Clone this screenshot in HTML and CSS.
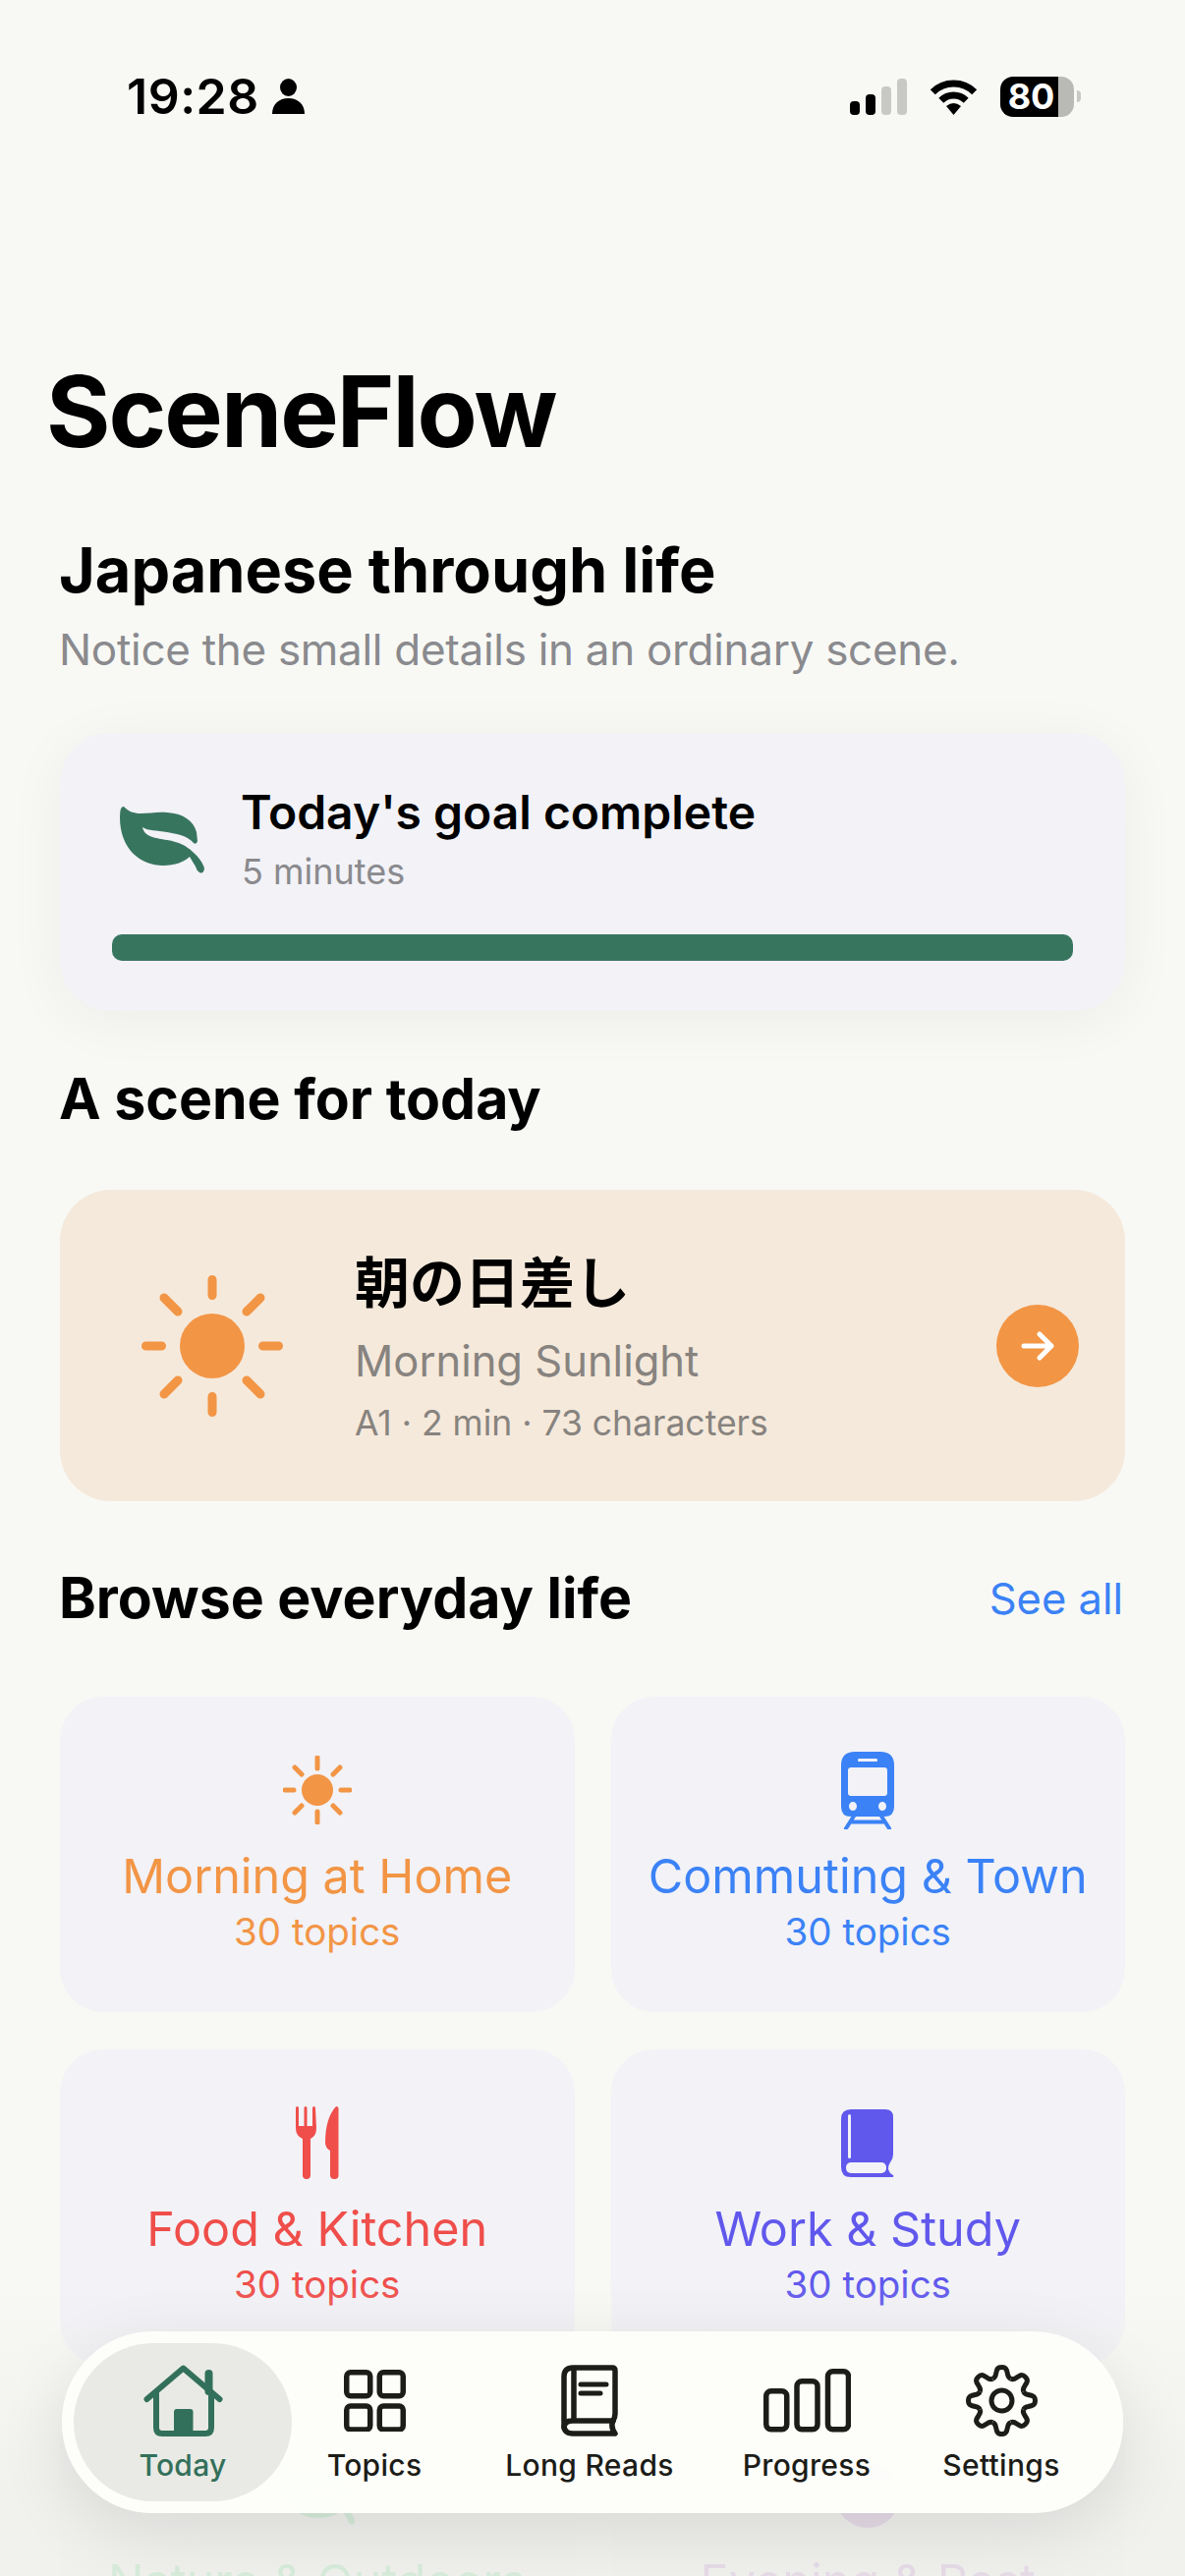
FILE: index.html
```html
<!DOCTYPE html>
<html lang="en">
<head>
<meta charset="utf-8">
<title>SceneFlow</title>
<link rel="stylesheet" href="styles.css">
</head>
<body>
<div class="screen">
  <div class="status">
    <div class="status-left">
      <span class="time">19:28</span>
      <svg class="person" width="33" height="36" viewBox="0 0 33 36"><ellipse cx="16.5" cy="9" rx="8.5" ry="9"/><path d="M0 36C0 26 7 20 16.5 20S33 26 33 36Z"/></svg>
    </div>
    <div class="status-right">
      <div class="signal">
        <i class="sig sig1"></i><i class="sig sig2"></i><i class="sig sig3 off"></i><i class="sig sig4 off"></i>
      </div>
      <svg class="wifi" width="51" height="37" viewBox="0 0 51 37"><path d="M4.3 13.8A30 30 0 0 1 46.7 13.8M12.8 22.3A18 18 0 0 1 38.2 22.3" fill="none" stroke="#000" stroke-width="7"/><path d="M25.5 37L18 28Q25.5 22 33 28Z"/></svg>
      <div class="battery"><div class="battery-body"><span class="battery-fill">80</span><span class="battery-rest"></span></div><span class="battery-cap"></span></div>
    </div>
  </div>

  <h1 class="brand">SceneFlow</h1>

  <main class="content">
    <h2 class="headline">Japanese through life</h2>
    <p class="tagline">Notice the small details in an ordinary scene.</p>

    <section class="goal-card">
      <div class="goal-row">
        <svg class="leaf" width="90" height="72" viewBox="0 0 90 72"><path d="M6 2C11 7 16 9 23 9C32 9 40 7 50 8C66 9 77 16 80 28L81 37Q80 41 77 39C70 31 60 30 50 28C40 26 31 27 25 23C27 33 38 34 50 36C62 38 70 42 76 48C82 53 87 60 88 65Q87 71 83 69Q80 67 79 63L73 53C68 58 58 62 46 62C24 62 2 46 2 13Q2 1 6 2Z"/></svg>
        <div>
          <div class="goal-title">Today's goal complete</div>
          <div class="goal-sub">5 minutes</div>
        </div>
      </div>
      <div class="goal-bar"></div>
    </section>

    <h2 class="section-title scene-heading">A scene for today</h2>

    <section class="scene-card">
      <svg class="scene-sun" width="144" height="144" viewBox="0 0 144 144">
        <circle cx="72" cy="72" r="33"/>
        <g class="rays">
          <path d="M72 4.500V20.500M72 123.500V139.500M4.500 72H20.500M123.500 72H139.500M23 23L37 37M107 107L121 121M121 23L107 37M37 107L23 121"/>
        </g>
      </svg>
      <div class="scene-text">
        <div class="scene-jp">朝の日差し</div>
        <div class="scene-en">Morning Sunlight</div>
        <div class="scene-meta">A1 · 2 min · 73 characters</div>
      </div>
      <div class="scene-go">
        <svg width="34" height="30" viewBox="0 0 34 30"><path d="M3 15H31M19 3L31 15L19 27" fill="none" stroke="#fff" stroke-width="5" stroke-linecap="round" stroke-linejoin="round"/></svg>
      </div>
    </section>

    <div class="browse-head">
      <h2 class="section-title">Browse everyday life</h2>
      <span class="see-all">See all</span>
    </div>

    <section class="grid">
      <article class="topic orange">
        <div class="topic-icon">
          <svg width="70" height="70" viewBox="0 0 70 70"><circle cx="35" cy="35" r="16"/><path class="thin-rays" d="M35 2V13M35 57V68M2 35H11M59 35H68M12 12L19 19M58 12L51 19M12 58L19 51M58 58L51 51"/></svg>
        </div>
        <div class="topic-name">Morning at Home</div>
        <div class="topic-count">30 topics</div>
      </article>
      <article class="topic blue">
        <div class="topic-icon">
          <svg width="54" height="79" viewBox="0 0 54 79"><path fill-rule="evenodd" d="M14 0H40Q54 0 54 14V56Q54 66 44 66H10Q0 66 0 56V14Q0 0 14 0ZM18 7Q17 7 17 8.500Q17 10 18 10H36Q37 10 37 8.500Q37 7 36 7ZM10 16Q7 16 7 19V42Q7 45 10 45H44Q47 45 47 42V19Q47 16 44 16ZM12 51A4 4.500 0 1 0 12 60A4 4.500 0 1 0 12 51ZM42 51A4 4.500 0 1 0 42 60A4 4.500 0 1 0 42 51Z"/><path class="rails" d="M14 64L5 78M40 64L49 78M10 71.500H44"/></svg>
        </div>
        <div class="topic-name">Commuting &amp; Town</div>
        <div class="topic-count">30 topics</div>
      </article>
      <article class="topic red">
        <div class="topic-icon">
          <svg width="44" height="74" viewBox="0 0 44 74"><path d="M0 2Q0 0 1.500 0Q3 0 3 2V20H8.500V2Q8.500 0 10 0Q11.500 0 11.500 2V20H17V2Q17 0 18.500 0Q20 0 20 2L21 22Q21 30 15 33V70Q15 74 11 74Q7 74 7 70V33Q0 30 0 22ZM41 0Q43.500 0 43.500 2V70Q43.500 74 39.500 74Q35 74 35 70V45Q30 42 30 37Q30 12 41 0Z"/></svg>
        </div>
        <div class="topic-name">Food &amp; Kitchen</div>
        <div class="topic-count">30 topics</div>
      </article>
      <article class="topic indigo">
        <div class="topic-icon">
          <svg width="54" height="69" viewBox="0 0 54 69"><path d="M10 0H45Q53 0 53 8V46Q53 50 50 54Q46 60 50 65L53 67Q54 69 52 69H10Q0 69 0 59V10Q0 0 10 0Z"/><rect class="cut" x="7" y="5" width="3" height="45" rx="1.500"/><rect class="cut" x="5" y="54" width="41" height="11" rx="5"/></svg>
        </div>
        <div class="topic-name">Work &amp; Study</div>
        <div class="topic-count">30 topics</div>
      </article>
      <article class="topic green">
        <div class="topic-icon">
          <svg width="80" height="64" viewBox="0 0 90 72"><path d="M6 2C11 7 16 9 23 9C32 9 40 7 50 8C66 9 77 16 80 28L81 37Q80 41 77 39C70 31 60 30 50 28C40 26 31 27 25 23C27 33 38 34 50 36C62 38 70 42 76 48C82 53 87 60 88 65Q87 71 83 69Q80 67 79 63L73 53C68 58 58 62 46 62C24 62 2 46 2 13Q2 1 6 2Z"/></svg>
        </div>
        <div class="topic-name">Nature &amp; Outdoors</div>
      </article>
      <article class="topic purple">
        <div class="topic-icon">
          <svg width="70" height="70" viewBox="0 0 70 70"><circle cx="35" cy="35" r="33"/></svg>
        </div>
        <div class="topic-name">Evening &amp; Rest</div>
      </article>
    </section>
  </main>

  <div class="fade"></div>

  <nav class="tabbar">
    <a class="tab active">
      <span class="tab-icon"><svg width="81" height="73" viewBox="0 0 81 73"><path d="M66.500 9V27" fill="none" stroke="currentColor" stroke-width="8" stroke-linecap="round"/><path d="M3.500 35L40.500 3.500L77.500 35" fill="none" stroke="currentColor" stroke-width="6" stroke-linecap="round" stroke-linejoin="round"/><path d="M13 27V64Q13 70 19 70H63Q69 70 69 64V27" fill="none" stroke="currentColor" stroke-width="6"/><rect x="31" y="45" width="19.500" height="26" rx="3" fill="currentColor"/></svg></span>
      <span>Today</span>
    </a>
    <a class="tab">
      <span class="tab-icon"><svg width="63" height="63" viewBox="0 0 63 63"><g fill="none" stroke="currentColor" stroke-width="5.500"><rect x="2.750" y="2.750" width="24" height="24" rx="4"/><rect x="36.250" y="2.750" width="24" height="24" rx="4"/><rect x="2.750" y="37" width="24" height="24" rx="4"/><rect x="36.250" y="37" width="24" height="24" rx="4"/></g></svg></span>
      <span>Topics</span>
    </a>
    <a class="tab">
      <span class="tab-icon"><svg width="58" height="73" viewBox="0 0 58 73"><g fill="none" stroke="currentColor" stroke-width="5.500" stroke-linecap="round" stroke-linejoin="round"><path d="M55 6V50Q55 53 53 57Q50 63 55 70H12Q3 70 3 62V12Q3 3 12 3H52Q55 3 55 6Z"/><path d="M3 64Q3 57 12 57H53"/><path d="M13 4V56"/><path d="M20 20H46M20 29H40" stroke-width="5"/></g></svg></span>
      <span>Long Reads</span>
    </a>
    <a class="tab">
      <span class="tab-icon"><svg width="89" height="65" viewBox="0 0 89 65"><g fill="none" stroke="currentColor" stroke-width="5.500"><rect x="2.750" y="22.750" width="21" height="39" rx="5"/><rect x="34" y="12.750" width="21" height="49" rx="5"/><rect x="65.500" y="2.750" width="21" height="59" rx="5"/></g></svg></span>
      <span>Progress</span>
    </a>
    <a class="tab">
      <span class="tab-icon"><svg width="73" height="73" viewBox="-36.500 -36.500 73 73">
        <defs><path id="tooth" d="M-9.200 -22.200Q-6.500 -23.500 -6 -27L-5 -31Q-4 -34 0 -34Q4 -34 5 -31L6 -27Q6.500 -23.500 9.200 -22.200"/></defs>
        <g fill="none" stroke="currentColor" stroke-width="5" stroke-linejoin="round">
          <use href="#tooth"/><use href="#tooth" transform="rotate(45)"/><use href="#tooth" transform="rotate(90)"/><use href="#tooth" transform="rotate(135)"/><use href="#tooth" transform="rotate(180)"/><use href="#tooth" transform="rotate(225)"/><use href="#tooth" transform="rotate(270)"/><use href="#tooth" transform="rotate(315)"/>
          <circle r="10.500"/>
        </g>
      </svg></span>
      <span>Settings</span>
    </a>
  </nav>
</div>
</body>
</html>
```

FILE: styles.css
```css
* { box-sizing: border-box; margin: 0; padding: 0; }
html, body { height: 100%; }
body {
  background: #f8f9f5;
  color: #000;
  font-family: Inter, "Noto Sans CJK JP", sans-serif;
  overflow: hidden;
}
.screen { position: relative; width: 1206px; height: 2622px; overflow: hidden; background: #f8f9f5; }

.status { display: flex; justify-content: space-between; align-items: center; height: 42px; margin-top: 77px; padding: 0 106px 0 129px; }
.status-left { display: flex; align-items: center; gap: 13px; }
.time { font-size: 50px; font-weight: 600; line-height: 42px; letter-spacing: 0.5px; }
.status-right { display: flex; align-items: center; gap: 22px; }
.signal { display: flex; align-items: flex-end; gap: 6px; height: 37px; }
.sig { display: block; width: 10px; border-radius: 4px; background: #000; }
.sig.off { background: #c8c9c4; }
.sig1 { height: 14px; }
.sig2 { height: 21px; }
.sig3 { height: 29px; }
.sig4 { height: 37px; }
.battery { display: flex; align-items: center; gap: 3px; }
.battery-body { display: flex; width: 75px; height: 41px; border-radius: 13px; overflow: hidden; }
.battery-fill { display: flex; align-items: center; justify-content: center; width: 59px; background: #000; color: #fff; font-size: 36px; font-weight: 700; padding-left: 4px; }
.battery-rest { flex: 1; background: #b9bab5; }
.battery-cap { width: 4px; height: 12px; border-radius: 0 4px 4px 0; background: #c8c9c4; }

.brand { margin: 240px 0 0 47px; font-size: 100px; line-height: 120px; font-weight: 700; letter-spacing: -2px; }

.content { padding: 0 61px; }
.headline { margin-top: 63px; margin-left: -1px; font-size: 63px; line-height: 76px; font-weight: 700; }
.tagline { margin-top: 16px; margin-left: -1px; font-size: 44px; line-height: 54px; color: #8a8a8e; letter-spacing: -0.3px; }

.goal-card { margin-top: 58px; height: 283px; padding: 54px 53px 0; background: #f2f2f7; border-radius: 52px; box-shadow: 0 10px 60px rgba(0, 0, 0, 0.05); }
.goal-row { display: flex; align-items: flex-start; }
.leaf { margin: 19px 37px 0 6px; fill: #38755f; flex: none; }
.goal-title { margin-left: -2px; font-size: 48px; line-height: 54px; font-weight: 600; }
.goal-sub { margin-top: 11px; margin-left: -1px; font-size: 36px; line-height: 44px; color: #8a8a8e; }
.goal-bar { height: 27px; margin-top: 42px; background: #38755f; border-radius: 10px; }

.section-title { margin-left: -1px; font-size: 57.200px; line-height: 70px; font-weight: 700; }
.scene-heading { margin-top: 55px; }

.scene-card { display: flex; align-items: center; height: 317px; margin-top: 57px; padding: 0 47px 0 83px; background: #f5e9db; border-radius: 52px; }
.scene-sun { flex: none; margin-right: 73px; fill: #f29545; }
.rays path { fill: none; stroke: #f29545; stroke-width: 9; stroke-linecap: round; }
.scene-text { flex: 1; padding-top: 3px; }
.scene-jp { font-size: 56px; line-height: 70px; font-weight: 700; }
.scene-en { margin-top: 14px; font-size: 43.500px; line-height: 60px; color: #87837f; }
.scene-meta { margin-top: 11px; font-size: 35.500px; line-height: 46px; color: #87837f; }
.scene-go { display: flex; align-items: center; justify-content: center; flex: none; width: 84px; height: 84px; border-radius: 50%; background: #f29545; }

.browse-head { display: flex; align-items: center; justify-content: space-between; margin-top: 64px; padding-right: 2px; }
.see-all { font-size: 43.500px; line-height: 70px; color: #3b82f6; }

.grid { display: grid; grid-template-columns: 1fr 1fr; gap: 38px 37px; margin-top: 65px; }
.topic { display: flex; flex-direction: column; align-items: center; height: 321px; padding-top: 50px; background: #f2f2f7; border-radius: 44px; }
.topic-icon { display: flex; align-items: center; justify-content: center; height: 90px; }
.topic-icon svg { fill: currentColor; }
.topic-name { margin-top: 13px; font-size: 48.500px; line-height: 60px; }
.topic-count { margin-top: 1px; font-size: 38.500px; line-height: 50px; }
.thin-rays { fill: none; stroke: currentColor; stroke-width: 5; stroke-linecap: round; }
.rails { fill: none; stroke: currentColor; stroke-width: 4; stroke-linecap: round; }
.cut { fill: #f2f2f7; }
.orange { color: #f29545; }
.blue { color: #3b82f6; }
.red { color: #ef4e4a; }
.indigo { color: #6058ec; }
.green { color: #22c55e; }
.purple { color: #9c3fc4; }

.fade {
  position: absolute; left: 0; right: 0; bottom: 0; height: 300px;
  background: linear-gradient(to bottom, rgba(248, 249, 245, 0), rgba(240, 241, 236, 0.88) 70%);
}
.tabbar {
  position: absolute; left: 63px; top: 2373px; width: 1080px; height: 185px;
  display: flex; align-items: stretch; padding: 12px;
  background: rgba(253, 254, 250, 0.97);
  border-radius: 92px;
  box-shadow: 0 20px 70px rgba(0, 0, 0, 0.1);
}
.tab {
  display: flex; flex-direction: column; align-items: center; flex: none;
  padding-top: 22px; color: #1c1c18; font-size: 30px; line-height: 36px; font-weight: 500; letter-spacing: 0.3px;
}
.tab-icon { display: flex; align-items: center; justify-content: center; height: 73px; margin-bottom: 11px; }
.tab:nth-child(1) { width: 222px; }
.tab:nth-child(2) { width: 168px; }
.tab:nth-child(3) { width: 270px; }
.tab:nth-child(4) { width: 172px; }
.tab:nth-child(5) { width: 224px; }
.tab.active { color: #33705b; background: #e9eae5; border-radius: 81px; }
```
